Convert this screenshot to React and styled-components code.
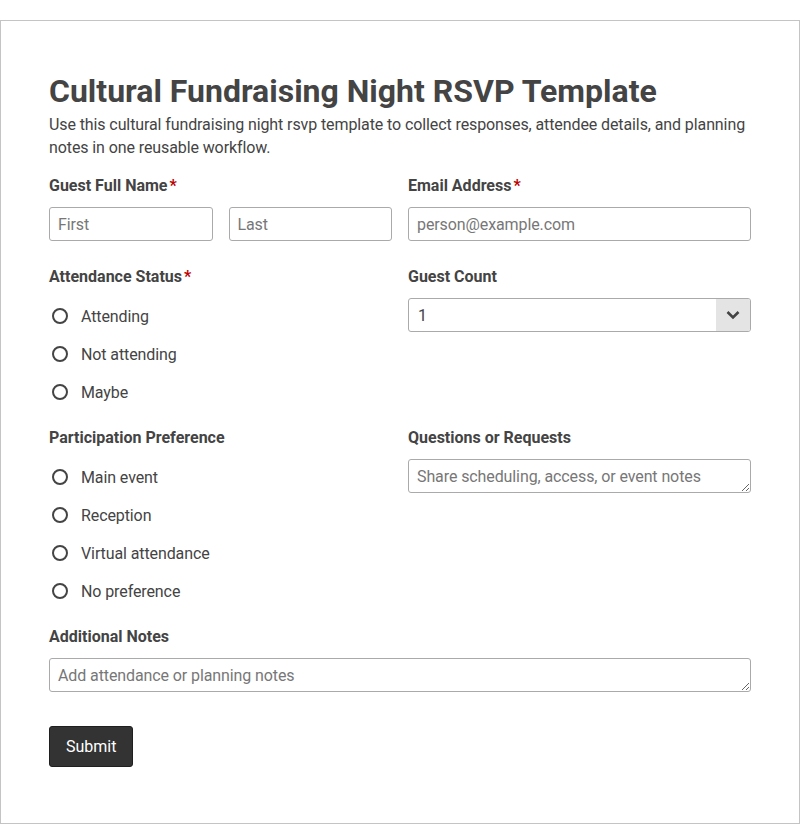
import React from 'react'
import styled, { createGlobalStyle } from 'styled-components'

const GlobalStyle = createGlobalStyle`
  html, body {
    margin: 0;
    padding: 0;
    background: #fff;
  }
  body {
    font-family: Roboto, "Liberation Sans", Arial, sans-serif;
    color: #444;
  }
  * {
    box-sizing: border-box;
  }
`

const Card = styled.form`
  margin-top: 20px;
  border: 1px solid #c4c4c4;
  padding: 51px 48px 56px;
  min-height: 804px;
`

const Title = styled.h1`
  margin: 0;
  font-size: 32px;
  line-height: 38px;
  font-weight: 700;
  color: #444;
`

const Description = styled.p`
  margin: 3px 0 17px;
  font-size: 16px;
  line-height: 23px;
  letter-spacing: -0.1px;
  color: #444;
`

const Grid = styled.div`
  display: grid;
  grid-template-columns: repeat(2, 1fr);
  column-gap: 16px;
  row-gap: 26px;
`

const Field = styled.div`
  grid-column: ${p => (p.wide ? '1 / -1' : 'auto')};
`

const Label = styled.div`
  font-size: 16px;
  line-height: 20px;
  font-weight: 700;
  color: #444;
  margin-bottom: 11px;
`

const Required = styled.span`
  color: #b00;
  margin-left: 2px;
`

const Pair = styled.div`
  display: grid;
  grid-template-columns: 1fr 1fr;
  gap: 16px;
`

const Input = styled.input`
  display: block;
  width: 100%;
  height: 34px;
  border: 1px solid #aaa;
  border-radius: 3px;
  padding: 0 8px;
  font-family: inherit;
  font-size: 16px;
  letter-spacing: -0.1px;
  color: #444;
  &::placeholder {
    color: #777;
  }
`

const TextArea = styled.textarea`
  display: block;
  width: 100%;
  height: 34px;
  border: 1px solid #aaa;
  border-radius: 3px;
  padding: 7px 8px 5px;
  font-family: inherit;
  font-size: 16px;
  line-height: 20px;
  letter-spacing: -0.1px;
  color: #444;
  resize: vertical;
  &::placeholder {
    color: #777;
  }
`

const SelectWrap = styled.div`
  display: flex;
  height: 34px;
  border: 1px solid #aaa;
  border-radius: 3px;
  overflow: hidden;
`

const SelectValue = styled.div`
  flex: 1;
  display: flex;
  align-items: center;
  padding: 0 9px;
  font-size: 16px;
  color: #444;
`

const SelectArrow = styled.div`
  width: 34px;
  display: flex;
  align-items: center;
  justify-content: center;
  background: #e4e4e4;
`

const RadioList = styled.div`
  display: flex;
  flex-direction: column;
  gap: 14px;
  margin: 17px 0 -2px;
`

const RadioRow = styled.label`
  display: flex;
  align-items: center;
  height: 24px;
  font-size: 16px;
  letter-spacing: -0.1px;
  color: #444;
`

const Circle = styled.span`
  width: 16px;
  height: 16px;
  border: 2px solid #444;
  border-radius: 50%;
  margin: 0 13px 0 3px;
`

const Submit = styled.button`
  margin-top: 34px;
  height: 41px;
  padding: 0 16px;
  background: #333;
  color: #fff;
  border: 1px solid #1f1f1f;
  border-radius: 3px;
  font-family: inherit;
  font-size: 16px;
`

const Radio = ({ children }) => (
  <RadioRow>
    <Circle />
    {children}
  </RadioRow>
)

const Chevron = () => (
  <svg width="14" height="10" viewBox="0 0 14 10">
    <path d="M1.5 2 L7 7.5 L12.5 2" fill="none" stroke="#444" strokeWidth="2.6" />
  </svg>
)

const App = () => (
  <>
    <GlobalStyle />
    <Card onSubmit={e => e.preventDefault()}>
      <Title>Cultural Fundraising Night RSVP Template</Title>
      <Description>
        Use this cultural fundraising night rsvp template to collect responses, attendee details, and planning notes in one reusable workflow.
      </Description>
      <Grid>
        <Field>
          <Label>Guest Full Name<Required>*</Required></Label>
          <Pair>
            <Input placeholder="First" />
            <Input placeholder="Last" />
          </Pair>
        </Field>
        <Field>
          <Label>Email Address<Required>*</Required></Label>
          <Input placeholder="person@example.com" />
        </Field>

        <Field>
          <Label>Attendance Status<Required>*</Required></Label>
          <RadioList>
            <Radio>Attending</Radio>
            <Radio>Not attending</Radio>
            <Radio>Maybe</Radio>
          </RadioList>
        </Field>
        <Field>
          <Label>Guest Count</Label>
          <SelectWrap>
            <SelectValue>1</SelectValue>
            <SelectArrow><Chevron /></SelectArrow>
          </SelectWrap>
        </Field>

        <Field>
          <Label>Participation Preference</Label>
          <RadioList>
            <Radio>Main event</Radio>
            <Radio>Reception</Radio>
            <Radio>Virtual attendance</Radio>
            <Radio>No preference</Radio>
          </RadioList>
        </Field>
        <Field>
          <Label>Questions or Requests</Label>
          <TextArea placeholder="Share scheduling, access, or event notes" />
        </Field>

        <Field wide>
          <Label>Additional Notes</Label>
          <TextArea placeholder="Add attendance or planning notes" />
        </Field>
      </Grid>
      <Submit type="submit">Submit</Submit>
    </Card>
  </>
)

export default App
